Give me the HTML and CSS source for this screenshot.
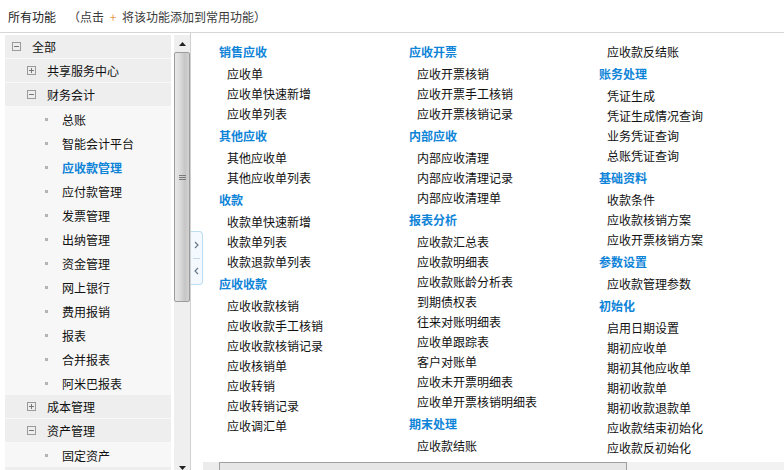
FILE: index.html
```html
<!DOCTYPE html>
<html lang="zh">
<head>
<meta charset="utf-8">
<link rel="stylesheet" href="styles.css">
</head>
<body>
<div class="top">
  <span class="title">所有功能</span>
  <span class="hint">（点击 <span class="plus">+</span> 将该功能添加到常用功能）</span>
</div>
<div class="main">
  <div class="side">
    <div class="tree">
      <div class="row grp l1"><svg class="box" viewBox="0 0 9 9"><rect x="0.5" y="0.5" width="8" height="8" fill="none" stroke="#9a9a9a"/><path d="M2 4.5h5" stroke="#777"/></svg><span>全部</span></div>
      <div class="row grp l2"><svg class="box" viewBox="0 0 9 9"><rect x="0.5" y="0.5" width="8" height="8" fill="none" stroke="#9a9a9a"/><path d="M2 4.5h5M4.5 2v5" stroke="#777"/></svg><span>共享服务中心</span></div>
      <div class="row grp l2"><svg class="box" viewBox="0 0 9 9"><rect x="0.5" y="0.5" width="8" height="8" fill="none" stroke="#9a9a9a"/><path d="M2 4.5h5" stroke="#777"/></svg><span>财务会计</span></div>
      <div class="row leaf"><i class="dot"></i><span>总账</span></div>
      <div class="row leaf"><i class="dot"></i><span>智能会计平台</span></div>
      <div class="row leaf active"><i class="dot"></i><span>应收款管理</span></div>
      <div class="row leaf"><i class="dot"></i><span>应付款管理</span></div>
      <div class="row leaf"><i class="dot"></i><span>发票管理</span></div>
      <div class="row leaf"><i class="dot"></i><span>出纳管理</span></div>
      <div class="row leaf"><i class="dot"></i><span>资金管理</span></div>
      <div class="row leaf"><i class="dot"></i><span>网上银行</span></div>
      <div class="row leaf"><i class="dot"></i><span>费用报销</span></div>
      <div class="row leaf"><i class="dot"></i><span>报表</span></div>
      <div class="row leaf"><i class="dot"></i><span>合并报表</span></div>
      <div class="row leaf"><i class="dot"></i><span>阿米巴报表</span></div>
      <div class="row grp l2"><svg class="box" viewBox="0 0 9 9"><rect x="0.5" y="0.5" width="8" height="8" fill="none" stroke="#9a9a9a"/><path d="M2 4.5h5M4.5 2v5" stroke="#777"/></svg><span>成本管理</span></div>
      <div class="row grp l2"><svg class="box" viewBox="0 0 9 9"><rect x="0.5" y="0.5" width="8" height="8" fill="none" stroke="#9a9a9a"/><path d="M2 4.5h5" stroke="#777"/></svg><span>资产管理</span></div>
      <div class="row leaf"><i class="dot"></i><span>固定资产</span></div>
      <div class="row grp l2"><span></span></div>
    </div>
    <div class="vscroll">
      <div class="sbtn"><svg viewBox="0 0 7 4" width="7" height="4"><path d="M0 4L3.5 0L7 4Z" fill="#222"/></svg></div>
      <div class="thumb"><div class="grip"><i></i><i></i><i></i></div></div>
      <div class="strack"></div>
      <div class="sbtn down"><svg viewBox="0 0 7 4" width="7" height="4"><path d="M0 0L3.5 4L7 0Z" fill="#222"/></svg></div>
    </div>
  </div>
  <div class="content">
    <div class="toggle">
      <div class="tg"><svg viewBox="0 0 5 8" width="5" height="8"><path d="M1 1l3 3-3 3" fill="none" stroke="#6a7a8a" stroke-width="1.2"/></svg></div>
      <div class="tg"><svg viewBox="0 0 5 8" width="5" height="8"><path d="M4 1L1 4l3 3" fill="none" stroke="#6a7a8a" stroke-width="1.2"/></svg></div>
    </div>
    <div class="cols">
      <div class="col">
        <div class="h">销售应收</div>
        <div class="it">应收单</div>
        <div class="it">应收单快速新增</div>
        <div class="it">应收单列表</div>
        <div class="h">其他应收</div>
        <div class="it">其他应收单</div>
        <div class="it">其他应收单列表</div>
        <div class="h">收款</div>
        <div class="it">收款单快速新增</div>
        <div class="it">收款单列表</div>
        <div class="it">收款退款单列表</div>
        <div class="h">应收收款</div>
        <div class="it">应收收款核销</div>
        <div class="it">应收收款手工核销</div>
        <div class="it">应收收款核销记录</div>
        <div class="it">应收核销单</div>
        <div class="it">应收转销</div>
        <div class="it">应收转销记录</div>
        <div class="it">应收调汇单</div>
      </div>
      <div class="col">
        <div class="h">应收开票</div>
        <div class="it">应收开票核销</div>
        <div class="it">应收开票手工核销</div>
        <div class="it">应收开票核销记录</div>
        <div class="h">内部应收</div>
        <div class="it">内部应收清理</div>
        <div class="it">内部应收清理记录</div>
        <div class="it">内部应收清理单</div>
        <div class="h">报表分析</div>
        <div class="it">应收款汇总表</div>
        <div class="it">应收款明细表</div>
        <div class="it">应收款账龄分析表</div>
        <div class="it">到期债权表</div>
        <div class="it">往来对账明细表</div>
        <div class="it">应收单跟踪表</div>
        <div class="it">客户对账单</div>
        <div class="it">应收未开票明细表</div>
        <div class="it">应收单开票核销明细表</div>
        <div class="h">期末处理</div>
        <div class="it">应收款结账</div>
      </div>
      <div class="col c3">
        <div class="it">应收款反结账</div>
        <div class="h">账务处理</div>
        <div class="it">凭证生成</div>
        <div class="it">凭证生成情况查询</div>
        <div class="it">业务凭证查询</div>
        <div class="it">总账凭证查询</div>
        <div class="h">基础资料</div>
        <div class="it">收款条件</div>
        <div class="it">应收款核销方案</div>
        <div class="it">应收开票核销方案</div>
        <div class="h">参数设置</div>
        <div class="it">应收款管理参数</div>
        <div class="h">初始化</div>
        <div class="it">启用日期设置</div>
        <div class="it">期初应收单</div>
        <div class="it">期初其他应收单</div>
        <div class="it">期初收款单</div>
        <div class="it">期初收款退款单</div>
        <div class="it">应收款结束初始化</div>
        <div class="it">应收款反初始化</div>
      </div>
    </div>
    <div class="hscroll">
      <div class="hbtn"></div>
      <div class="hthumb"></div>
      <div class="htrack"></div>
    </div>
  </div>
</div>
</body>
</html>
```
FILE: styles.css
```css
html, body {
  margin: 0;
  padding: 0;
  height: 470px;
  overflow: hidden;
  background: #fff;
  font-family: "Noto Sans CJK SC", "Noto Sans", "Liberation Sans", sans-serif;
  font-size: 12px;
  color: #111;
}
.top {
  padding-left: 8px;
  display: flex;
  align-items: center;
  border-bottom: 1px solid #d6d6d6;
  box-sizing: border-box;
  height: 33px;
}
.title { color: #222; }
.hint { color: #3a3a3a; margin-left: 12px; }
.plus { color: #e89a50; margin: 0 3px; }
.main {
  display: flex;
  height: 437px;
}
.side {
  display: flex;
  width: 191px;
  border-right: 1px solid #d0d0d0;
  padding-left: 5px;
  padding-top: 2px;
  box-sizing: border-box;
  flex: none;
}
.tree {
  width: 166px;
  flex: none;
  overflow: hidden;
  background: #f7f7f7;
}
.row {
  height: 24px;
  display: flex;
  align-items: center;
  box-sizing: border-box;
  white-space: nowrap;
}
.grp {
  background: #eeeeee;
  border-bottom: 1px solid #f8f8f8;
}
.box { width: 9px; height: 9px; flex: none; }
.l1 { padding-left: 7px; }
.l1 .box { margin-right: 11px; }
.l2 { padding-left: 22px; }
.l2 .box { margin-right: 11px; }
.leaf { padding-left: 40px; background: #f7f7f7; }
.dot {
  width: 3px;
  height: 3px;
  background: #b4b4b4;
  margin-right: 14px;
  flex: none;
}
.active span { color: #0e84d8; font-weight: bold; }
.vscroll {
  width: 16px;
  margin-left: 3px;
  display: flex;
  flex-direction: column;
  background: #efefef;
}
.sbtn {
  height: 17px;
  display: flex;
  align-items: center;
  justify-content: center;
  flex: none;
}
.thumb {
  height: 250px;
  border: 1px solid #9c9c9c;
  border-radius: 2px;
  box-sizing: border-box;
  background: linear-gradient(to right, #e8e8e8, #dedede 30%, #c6c6c6 70%, #d2d2d2);
  display: flex;
  align-items: center;
  justify-content: center;
  flex: none;
}
.grip { display: flex; flex-direction: column; gap: 1px; }
.grip i { display: block; width: 7px; height: 1px; background: #7a7a7a; }
.strack { flex: 1; }
.down { height: 12px; align-items: flex-end; }
.content {
  flex: 1;
  position: relative;
  display: flex;
  flex-direction: column;
}
.toggle {
  position: absolute;
  left: 0;
  top: 198px;
  width: 12px;
  height: 54px;
  box-sizing: border-box;
  border: 1px solid #bcdcf2;
  border-left: none;
  border-radius: 0 4px 4px 0;
  background: #f3f9fe;
  display: flex;
  flex-direction: column;
}
.tg {
  flex: 1;
  display: flex;
  align-items: center;
  justify-content: center;
}
.tg + .tg { border-top: 1px solid #c6d6e4; margin: 0 2px; }
.cols {
  flex: 1;
  display: flex;
  padding-left: 28px;
  padding-top: 7px;
  overflow: hidden;
}
.col { width: 190px; flex: none; }
.c3 { padding-top: 2px; }
.h {
  height: 24px;
  line-height: 24px;
  color: #0e84d8;
  font-weight: bold;
}
.it {
  height: 20px;
  line-height: 20px;
  padding-left: 8px;
  color: #111;
  white-space: nowrap;
}
.hscroll {
  height: 8px;
  display: flex;
  margin-left: 12px;
  flex: none;
  background: #efefef;
}
.hbtn { width: 16px; flex: none; background: #ececec; }
.hthumb {
  width: 408px;
  flex: none;
  border: 1px solid #a0a0a0;
  border-bottom: none;
  box-sizing: border-box;
  background: #e6e6e6;
}
.htrack { flex: 1; background: #f2f2f2; }
```
